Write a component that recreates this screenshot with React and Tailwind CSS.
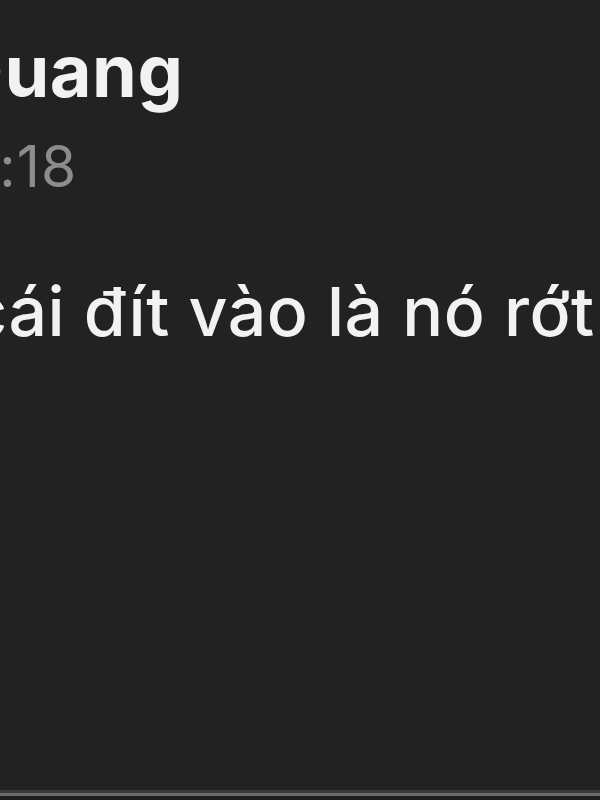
export default function App() {
  return (
    <div className="w-[600px] h-[800px] overflow-hidden bg-[#222222] flex flex-col font-['Inter','Liberation_Sans',Arial,sans-serif]">
      {/* Message header */}
      <div className="pt-[35px] flex flex-col">
        <div className="ml-[-52px] text-[72px] leading-none font-bold tracking-[0.5px] text-[#f2f2f2] whitespace-nowrap">Quang</div>
        <div className="mt-[31px] ml-[-37px] text-[57px] leading-none tracking-[1px] text-[#8c8c8c] whitespace-nowrap">9:18</div>
      </div>

      {/* Message body */}
      <div className="mt-[82px] ml-[-32px] text-[68px] leading-none font-medium tracking-[0.5px] text-[#f2f2f2] whitespace-nowrap">
        cái đít vào là nó rớt
      </div>

      <div className="flex-1" />

      {/* Bottom divider */}
      <div className="h-[3px] bg-[#3a3a3a]" />
      <div className="h-[3px] bg-[#6a6a6a]" />
      <div className="h-[4px] bg-[#1e1e1e]" />
    </div>
  );
}
